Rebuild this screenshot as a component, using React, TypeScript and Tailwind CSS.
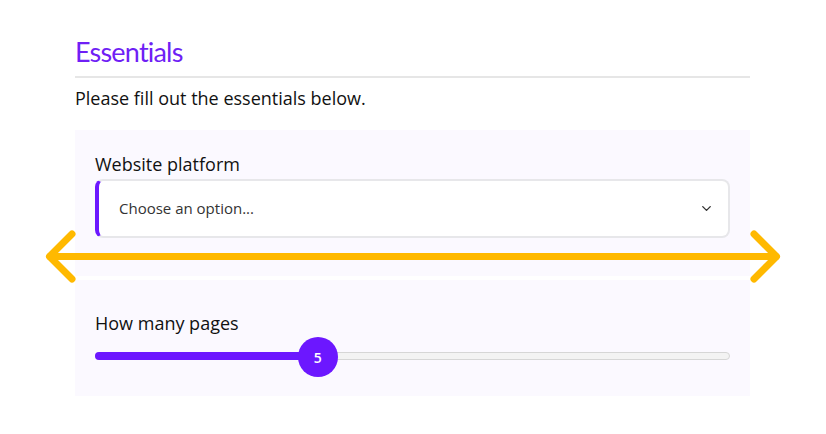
import { ChevronDown } from 'lucide-react'

const PURPLE = '#6c17ff'

function ArrowOverlay() {
  return (
    <svg
      className="pointer-events-none absolute left-0 top-0"
      width="826"
      height="434"
      viewBox="0 0 826 434"
      fill="none"
    >
      <g stroke="#ffb900" strokeWidth="7" strokeLinecap="round" strokeLinejoin="round">
        <path d="M50 256.5 H776" />
        <path d="M72 234 L49.5 256.5 L72 279" />
        <path d="M754 234 L776.5 256.5 L754 279" />
      </g>
    </svg>
  )
}

export default function App() {
  const value = 5
  const pct = 35.1

  return (
    <div
      className="relative h-[434px] w-[826px] overflow-hidden bg-white text-[#111]"
      style={{ fontFamily: '"Open Sans", "Noto Sans", sans-serif' }}
    >
      <div className="ml-[75px] w-[675px] pt-[35px]">
        <h2
          className="text-[27px] leading-[34px] text-[#6f1ff5]"
          style={{ fontFamily: 'Lato, sans-serif', letterSpacing: '-0.8px' }}
        >
          Essentials
        </h2>
        <div className="mt-[7px] h-[2px] bg-[#e6e6e6]" />
        <p className="mt-[7px] text-[18px] leading-[26px]">Please fill out the essentials below.</p>

        <section className="mt-[19px] bg-[#fbf9ff] px-5 pb-[38px] pt-[22px]">
          <label className="block text-[18px] leading-[25px]">Website platform</label>
          <div className="mt-[2px] flex h-[59px] items-center justify-between rounded-lg border-2 border-l-4 border-[#e7e7ea] border-l-[#6c17ff] bg-white pl-[20px] pr-[14px]">
            <span className="text-[15px] text-[#333]">Choose an option...</span>
            <ChevronDown className="h-[15px] w-[15px] text-[#333]" strokeWidth={2.2} />
          </div>
        </section>

        <section className="mt-[4px] bg-[#fbf9ff] px-5 pb-[19px] pt-[31px]">
          <label className="block text-[18px] leading-[25px]">How many pages</label>
          <div className="relative mt-[1px] h-[40px]">
            <div className="absolute left-0 right-0 top-[15px] h-[8px] rounded-full border border-[#d6d6d6] bg-[#f3f3f3]" />
            <div
              className="absolute left-0 top-[15px] h-[8px] rounded-l-full"
              style={{ width: `${pct}%`, background: PURPLE }}
            />
            <div
              className="absolute top-0 flex h-[40px] w-[40px] -translate-x-1/2 items-center justify-center rounded-full text-[14px] font-semibold text-white"
              style={{ left: `${pct}%`, background: PURPLE }}
            >
              {value}
            </div>
          </div>
        </section>
      </div>
      <ArrowOverlay />
    </div>
  )
}
